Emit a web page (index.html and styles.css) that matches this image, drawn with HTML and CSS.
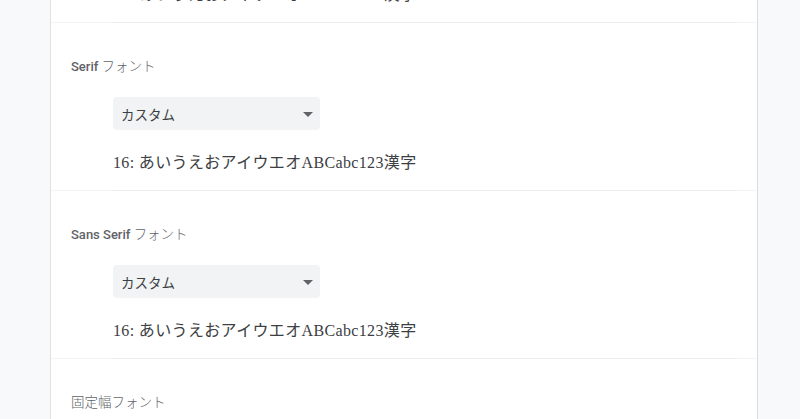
FILE: index.html
```html
<!DOCTYPE html>
<html lang="ja">
<head>
<meta charset="utf-8">
<link rel="stylesheet" href="styles.css">
</head>
<body>
<main class="card">
  <div class="sample sample-cut">16: あいうえおアイウエオABCabc123漢字</div>
  <div class="sep"><div class="sep-inner"></div></div>

  <section class="section">
    <div class="label"><span class="lat">Serif</span> <span class="ja">フォント</span></div>
    <div class="select"><span class="select-text">カスタム</span>
      <svg class="arrow" width="10" height="5" viewBox="0 0 10 5"><path d="M0 0 L10 0 L5 5 Z" fill="#5f6368"/></svg>
    </div>
    <div class="sample">16: あいうえおアイウエオABCabc123漢字</div>
  </section>
  <div class="sep"><div class="sep-inner"></div></div>

  <section class="section">
    <div class="label"><span class="lat">Sans Serif</span> <span class="ja">フォント</span></div>
    <div class="select"><span class="select-text">カスタム</span>
      <svg class="arrow" width="10" height="5" viewBox="0 0 10 5"><path d="M0 0 L10 0 L5 5 Z" fill="#5f6368"/></svg>
    </div>
    <div class="sample">16: あいうえおアイウエオABCabc123漢字</div>
  </section>
  <div class="sep"><div class="sep-inner"></div></div>

  <section class="section">
    <div class="label"><span class="ja">固定幅フォント</span></div>
  </section>
</main>
</body>
</html>
```

FILE: styles.css
```css
html, body {
  margin: 0;
  padding: 0;
  background: #f8f9fa;
  height: 100%;
  overflow: hidden;
}

.card {
  margin-left: 50px;
  width: 706px;
  min-height: 500px;
  background: #ffffff;
  border-left: 1px solid #dfe1e3;
  border-right: 1px solid #dcdee0;
}

.sep {
  height: 1px;
  background: #f3f4f4;
  display: flex;
}

.sep-inner {
  flex: 1;
  margin: 0 20px 0 62px;
  background: #ebecec;
}

.label {
  padding: 32px 0 0 20px;
  height: 20px;
  line-height: 20px;
  font-size: 13px;
  color: #5f6368;
}

.lat {
  font-family: Roboto, "Liberation Sans", sans-serif;
  font-weight: 500;
}

.ja {
  font-family: "Noto Sans CJK JP", sans-serif;
  font-size: 13.5px;
  font-weight: 300;
  color: #5f6368;
}

.select {
  margin: 22px 0 0 62px;
  width: 207px;
  height: 33px;
  box-sizing: border-box;
  background: #f1f3f4;
  border-radius: 4px;
  display: flex;
  align-items: center;
  justify-content: space-between;
  padding: 0 7px 0 8px;
}

.select-text {
  font-family: "Noto Sans CJK JP", sans-serif;
  font-size: 13.5px;
  color: #3c4043;
}

.arrow {
  display: block;
  margin-top: 1px;
}

.sample {
  margin: 0 20px 0 62px;
  padding: 21px 0 0;
  height: 24px;
  line-height: 24px;
  border-bottom: 15px solid transparent;
  font-size: 16px;
  letter-spacing: 0.35px;
  font-family: "Liberation Serif", "Noto Sans CJK JP", serif;
  color: #3c4043;
  white-space: nowrap;
}

.sample-cut {
  margin-top: -38px;
}
```
